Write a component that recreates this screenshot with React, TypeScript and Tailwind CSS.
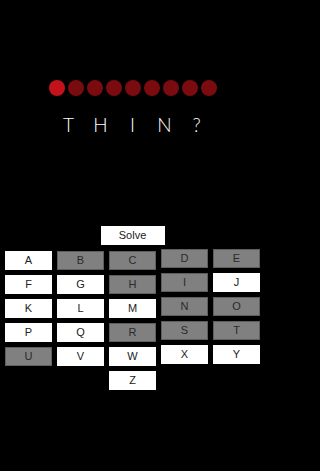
const columns: { keys: string[]; offset: boolean }[] = [
  { keys: ["A", "F", "K", "P", "U"], offset: true },
  { keys: ["B", "G", "L", "Q", "V"], offset: true },
  { keys: ["C", "H", "M", "R", "W", "Z"], offset: true },
  { keys: ["D", "I", "N", "S", "X"], offset: false },
  { keys: ["E", "J", "O", "T", "Y"], offset: false },
];

// letters already tried
const used = new Set(["B", "C", "D", "E", "H", "I", "N", "O", "R", "S", "T", "U"]);

const guess = ["T", "H", "I", "N", "?"];

function Key({ label }: { label: string }) {
  const off = used.has(label);
  return (
    <div
      className={
        off
          ? "h-[19px] w-[47px] flex items-center justify-center bg-[#808080] border border-[#5e5e5e] text-[11px] text-[#2a2a2a]"
          : "h-[19px] w-[47px] flex items-center justify-center bg-white text-[11px] text-[#222]"
      }
    >
      {label}
    </div>
  );
}

export default function App() {
  return (
    <div className="w-full min-h-screen bg-black">
      <div
        className="w-[265px] h-[471px] bg-black flex flex-col items-center overflow-hidden"
        style={{ fontFamily: '"Liberation Sans", Arial, sans-serif' }}
      >
        <div className="mt-[80px] flex gap-[3px]">
          {Array.from({ length: 9 }).map((_, i) => (
            <div
              key={i}
              className={
                i === 0
                  ? "w-4 h-4 rounded-full bg-[#c3121a]"
                  : "w-4 h-4 rounded-full bg-[#7a0c10]"
              }
            />
          ))}
        </div>

        <div
          className="mt-[17px] flex text-white text-[19px] font-light leading-[24px]"
          style={{ fontFamily: "Lato, Roboto, sans-serif" }}
        >
          {guess.map((c, i) => (
            <span key={i} className="w-[32px] text-center">
              {c}
            </span>
          ))}
        </div>

        <button className="mt-[89px] h-[19px] w-16 bg-white text-[11px] text-[#222] flex items-center justify-center">
          Solve
        </button>

        <div className="mt-[4px] flex gap-[5px]">
          {columns.map((col, i) => (
            <div
              key={i}
              className={col.offset ? "flex flex-col gap-[5px] pt-[2px]" : "flex flex-col gap-[5px]"}
            >
              {col.keys.map((k) => (
                <Key key={k} label={k} />
              ))}
            </div>
          ))}
        </div>
      </div>
    </div>
  );
}
